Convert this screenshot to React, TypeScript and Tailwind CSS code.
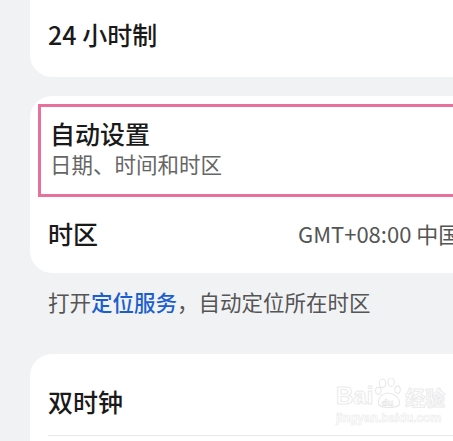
import React from 'react'

const CJK = "font-['Noto_Sans_CJK_SC','Noto_Sans',sans-serif]"

function Watermark() {
  return (
    <div className="pointer-events-none absolute left-[336px] top-[378px] flex flex-col items-start">
      <div className="flex items-end gap-[2px]">
        <span className="font-['Liberation_Sans',sans-serif] text-[24px] font-bold leading-none text-white [-webkit-text-stroke:1px_#ebebeb]">
          Bai
        </span>
        <svg width="28" height="32" viewBox="0 0 26 30" className="-mb-[2px]">
          <g fill="white" stroke="#e8e8e8" strokeWidth="1">
            <ellipse cx="7" cy="5" rx="3" ry="4" />
            <ellipse cx="15" cy="4" rx="3" ry="4" />
            <ellipse cx="3" cy="12" rx="2.6" ry="3.4" />
            <ellipse cx="21" cy="11" rx="2.6" ry="3.4" />
            <path d="M3 24 C3 17 8 14 12 14 C17 14 23 18 23 24 C23 29 3 29 3 24 Z" />
          </g>
          <text x="6" y="26" fontSize="9" fontWeight="bold" fill="white" stroke="#e4e4e4" strokeWidth="0.6" fontFamily="Liberation Sans, sans-serif">du</text>
        </svg>
        <span className={`${CJK} text-[20px] font-bold leading-none text-white [-webkit-text-stroke:1px_#ebebeb]`}>
          经验
        </span>
      </div>
      <span className="mt-[4px] font-['Liberation_Sans',sans-serif] text-[12px] font-bold leading-none text-white [-webkit-text-stroke:0.6px_#ebebeb]">
        jingyan.baidu.com
      </span>
    </div>
  )
}

export default function App() {
  return (
    <div className={`relative h-[441px] w-[453px] overflow-hidden bg-[#f1f2f4] pl-[30px] ${CJK}`}>
      {/* 24h card */}
      <div className="flex h-[77px] items-center rounded-bl-[22px] bg-white pb-[8px] pl-[18px]">
        <span className="text-[25px] font-medium leading-none text-[#1a1a1a]">24 小时制</span>
      </div>

      {/* auto / timezone card */}
      <div className="mt-[19px] rounded-l-[22px] bg-white pl-[8px] pt-[8px]">
        <div className="flex h-[93px] flex-col justify-center border-[3px] border-r-0 border-[#e7719b] pb-[6px] pl-[9px]">
          <span className="text-[25px] font-medium leading-[32px] text-[#1a1a1a]">自动设置</span>
          <span className="text-[21.5px] leading-[30px] text-[#666]">日期、时间和时区</span>
        </div>
        <div className="flex h-[76px] items-center whitespace-nowrap pb-[4px] pl-[10px]">
          <span className="w-[250px] shrink-0 text-[25px] font-medium leading-none text-[#1a1a1a]">时区</span>
          <span className="text-[22px] leading-none text-[#555]">GMT+08:00 中国标准时间</span>
        </div>
      </div>

      <p className="mt-[15px] whitespace-nowrap pl-[18px] text-[21.5px] leading-[28px] text-[#555]">
        打开<span className="font-medium text-[#1c5ecf]">定位服务</span>，自动定位所在时区
      </p>

      {/* dual clock card */}
      <div className="mt-[38px] rounded-l-[22px] bg-white">
        <div className="ml-[18px] flex h-[82px] items-center border-b border-[#e8e8e8] pt-[14px]">
          <span className="text-[25px] font-medium leading-none text-[#1a1a1a]">双时钟</span>
        </div>
        <div className="h-[40px]" />
      </div>

      <Watermark />
    </div>
  )
}
